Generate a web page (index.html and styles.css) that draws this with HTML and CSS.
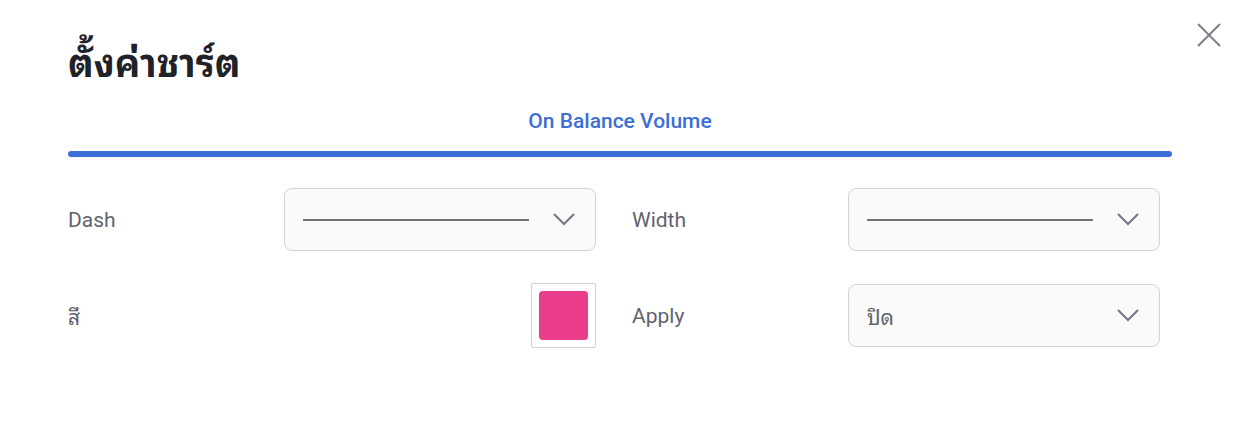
FILE: index.html
```html
<!DOCTYPE html>
<html lang="th">
<head>
<meta charset="utf-8">
<link rel="stylesheet" href="styles.css">
</head>
<body>
<div class="dialog">
  <button class="close" aria-label="close">
    <svg width="26" height="26" viewBox="0 0 26 26"><path d="M2 2 L24 24 M24 2 L2 24" stroke="#7b808b" stroke-width="2" fill="none"/></svg>
  </button>
  <h1 class="title">ตั้งค่าชาร์ต</h1>
  <div class="tabs">
    <div class="tab">On Balance Volume</div>
    <div class="tab-bar"></div>
  </div>
  <div class="grid">
    <div class="field">
      <div class="label">Dash</div>
      <div class="select"><span class="line"></span><svg class="chev" width="22" height="13" viewBox="0 0 22 13"><path d="M1 1 L11 11 L21 1" stroke="#737785" stroke-width="2" fill="none"/></svg></div>
    </div>
    <div class="field">
      <div class="label">Width</div>
      <div class="select"><span class="line"></span><svg class="chev" width="22" height="13" viewBox="0 0 22 13"><path d="M1 1 L11 11 L21 1" stroke="#737785" stroke-width="2" fill="none"/></svg></div>
    </div>
    <div class="field">
      <div class="label">สี</div>
      <div class="swatch-wrap"><div class="swatch"></div></div>
    </div>
    <div class="field">
      <div class="label">Apply</div>
      <div class="select"><span class="value">ปิด</span><svg class="chev" width="22" height="13" viewBox="0 0 22 13"><path d="M1 1 L11 11 L21 1" stroke="#737785" stroke-width="2" fill="none"/></svg></div>
    </div>
  </div>
</div>
</body>
</html>
```

FILE: styles.css
```css
html, body {
  margin: 0;
  padding: 0;
  background: #ffffff;
}
body {
  font-family: Roboto, "Noto Sans Thai Looped", "Noto Looped Thai", "Noto Sans Thai", "Noto Sans", sans-serif;
  width: 1244px;
  height: 428px;
  overflow: hidden;
}
.dialog {
  position: relative;
  padding: 36px 72px 0 68px;
}
.close {
  position: absolute;
  top: 22px;
  right: 22px;
  background: none;
  border: none;
  padding: 0;
  width: 26px;
  height: 26px;
  cursor: pointer;
}
.close svg { display: block; }
.title {
  margin: 0;
  font-size: 38px;
  font-weight: 700;
  color: #1f2329;
  line-height: 56px;
}
.tabs {
  margin-top: 14px;
  display: flex;
  flex-direction: column;
  align-items: center;
  width: 1104px;
}
.tab {
  font-size: 21px;
  font-weight: 500;
  color: #3b6fd6;
  line-height: 30px;
}
.tab-bar {
  margin-top: 15px;
  width: 100%;
  height: 6px;
  border-radius: 3px;
  background: #3d6fd6;
}
.grid {
  margin-top: 31px;
  display: grid;
  grid-template-columns: 528px 528px;
  column-gap: 36px;
  row-gap: 32px;
}
.field {
  display: flex;
  align-items: center;
  justify-content: space-between;
}
.label {
  font-size: 21px;
  color: #5f636f;
}
.select {
  box-sizing: border-box;
  width: 312px;
  height: 63px;
  border: 1px solid #d3d3d7;
  border-radius: 8px;
  background: #fafafa;
  display: flex;
  align-items: center;
  padding: 0 20px 0 18px;
}
.line {
  width: 226px;
  height: 2px;
  background: #737373;
}
.value {
  font-size: 21px;
  color: #5f636f;
}
.chev {
  margin-left: auto;
  display: block;
}
.swatch-wrap {
  box-sizing: border-box;
  width: 65px;
  height: 65px;
  border: 1px solid #d0d0d3;
  border-radius: 2px;
  padding: 7px;
}
.swatch {
  width: 100%;
  height: 100%;
  background: #ea3e8c;
  border-radius: 4px;
}
```
